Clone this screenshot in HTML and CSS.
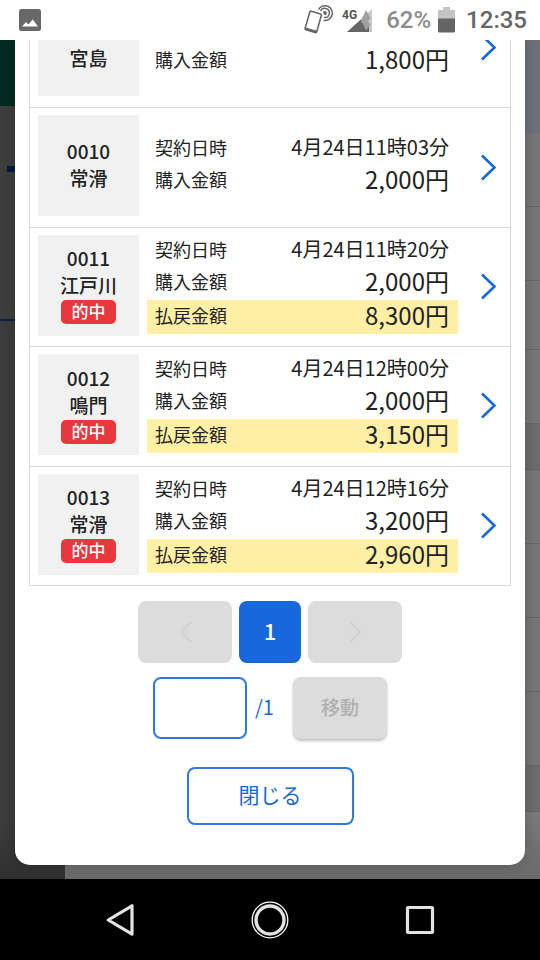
FILE: index.html
```
<!DOCTYPE html>
<html lang="ja">
<head>
<meta charset="utf-8">
<meta name="viewport" content="width=device-width, initial-scale=1">
<title>契約一覧</title>
<link rel="stylesheet" href="styles.css">
</head>
<body>
<header class="status">
  <svg class="status-photo" width="22" height="22" viewBox="0 0 22 22" aria-hidden="true"><rect width="22" height="22" rx="2.5" fill="#686868"/><path d="M3 17.500 7 13l2.500 2.500 4.200-5 5.300 7z" fill="#fff"/></svg>
  <svg class="status-nfc" width="30" height="30" viewBox="0 0 30 30" fill="none" stroke="#666" aria-hidden="true">
    <path d="M7.400 6.200 16.400 8.900Q17.700 9.300 17.300 10.600L12.800 26.600Q12.400 27.900 11.100 27.500L2 24.800Q.8 24.400 1.200 23.100L5.700 7.200Q6.100 5.800 7.400 6.200z" stroke-width="1.600"/>
    <path d="M1.600 23 12.900 26.200 12 27.500 1.400 24.400z" fill="#666"/>
    <path d="M14.400 4.600A7.400 7.400 0 1 1 19.500 15.400M16.600 6A4.600 4.600 0 1 1 20 12.500" stroke-width="1.500"/>
    <path d="M19 7.300A2 2 0 1 1 20.300 10z" fill="#666" stroke="none"/>
  </svg>
  <svg class="status-signal" width="30" height="26" viewBox="0 0 30 26" aria-hidden="true">
    <path d="M5 25 30 2v23z" fill="#c9c9c9"/>
    <path d="M5 25 19.500 12v3.500h7.500V25z" fill="#666"/>
    <path d="m20 11.500 4-8.500 4.500 8.500-3 3 3 3-4.500 6-4-9z" fill="#a0a0a0"/>
    <text x="0" y="12" class="signal-type">4G</text>
  </svg>
  <span class="status-level">62%</span>
  <svg class="status-battery" width="17" height="26" viewBox="0 0 17 26" aria-hidden="true"><path d="M5 0h7v3h5v9H0V3h5z" fill="#c4c4c4"/><path d="M0 11.500h17V24q0 1.500-1.500 1.500h-14Q0 25.500 0 24z" fill="#656565"/></svg>
  <span class="status-time">12:35</span>
</header>

<main class="stage">
  <div class="backdrop" aria-hidden="true">
    <div class="side"><div class="side-head"></div><div class="side-mark"></div><div class="side-panel"></div><div class="side-rest"></div></div>
    <div class="page">
      <div class="page-head"></div>
      <div class="page-row"></div><div class="page-row"></div><div class="page-row short"></div><div class="page-row"></div>
      <div class="page-gap"></div>
      <div class="page-row"></div><div class="page-row"></div><div class="page-row"></div><div class="page-row"></div>
      <div class="page-gap"></div>
      <div class="page-rest"></div>
    </div>
  </div>

  <section class="dialog" role="dialog" aria-label="契約一覧">
    <div class="list">
      <a class="row" href="#0009">
        <span class="race"><span>0009</span><span>宮島</span></span>
        <span class="details">
          <span class="line"><span>契約日時</span><span class="date">4月24日10時58分</span></span>
          <span class="line"><span>購入金額</span><span class="money">1,800円</span></span>
        </span>
        <svg class="arrow" width="17" height="27" viewBox="0 0 17 27" aria-hidden="true"><path d="M2 1.500 14.500 13.500 2 25.500"/></svg>
      </a>
      <a class="row" href="#0010">
        <span class="race"><span>0010</span><span>常滑</span></span>
        <span class="details">
          <span class="line"><span>契約日時</span><span class="date">4月24日11時03分</span></span>
          <span class="line"><span>購入金額</span><span class="money">2,000円</span></span>
        </span>
        <svg class="arrow" width="17" height="27" viewBox="0 0 17 27" aria-hidden="true"><path d="M2 1.500 14.500 13.500 2 25.500"/></svg>
      </a>
      <a class="row" href="#0011">
        <span class="race"><span>0011</span><span>江戸川</span><span class="hit">的中</span></span>
        <span class="details">
          <span class="line"><span>契約日時</span><span class="date">4月24日11時20分</span></span>
          <span class="line"><span>購入金額</span><span class="money">2,000円</span></span>
          <span class="line payout"><span>払戻金額</span><span class="money">8,300円</span></span>
        </span>
        <svg class="arrow" width="17" height="27" viewBox="0 0 17 27" aria-hidden="true"><path d="M2 1.500 14.500 13.500 2 25.500"/></svg>
      </a>
      <a class="row" href="#0012">
        <span class="race"><span>0012</span><span>鳴門</span><span class="hit">的中</span></span>
        <span class="details">
          <span class="line"><span>契約日時</span><span class="date">4月24日12時00分</span></span>
          <span class="line"><span>購入金額</span><span class="money">2,000円</span></span>
          <span class="line payout"><span>払戻金額</span><span class="money">3,150円</span></span>
        </span>
        <svg class="arrow" width="17" height="27" viewBox="0 0 17 27" aria-hidden="true"><path d="M2 1.500 14.500 13.500 2 25.500"/></svg>
      </a>
      <a class="row" href="#0013">
        <span class="race"><span>0013</span><span>常滑</span><span class="hit">的中</span></span>
        <span class="details">
          <span class="line"><span>契約日時</span><span class="date">4月24日12時16分</span></span>
          <span class="line"><span>購入金額</span><span class="money">3,200円</span></span>
          <span class="line payout"><span>払戻金額</span><span class="money">2,960円</span></span>
        </span>
        <svg class="arrow" width="17" height="27" viewBox="0 0 17 27" aria-hidden="true"><path d="M2 1.500 14.500 13.500 2 25.500"/></svg>
      </a>
    </div>

    <nav class="pager" aria-label="ページ">
      <button class="step" type="button" disabled aria-label="前へ"><svg width="13" height="22" viewBox="0 0 13 22" aria-hidden="true"><path d="M12 1 2 11l10 10"/></svg></button>
      <button class="current" type="button">1</button>
      <button class="step" type="button" disabled aria-label="次へ"><svg width="13" height="22" viewBox="0 0 13 22" aria-hidden="true"><path d="m1 1 10 10L1 21"/></svg></button>
    </nav>
    <form class="jump">
      <input id="page-number" type="text" inputmode="numeric">
      <label for="page-number">/1</label>
      <button type="button" disabled>移動</button>
    </form>
    <button class="close" type="button">閉じる</button>
  </section>
</main>

<nav class="keys" aria-label="ナビゲーション">
  <button type="button" aria-label="戻る"><svg width="40" height="40" viewBox="0 0 40 40" aria-hidden="true"><path d="M32 5.800v28.400L8.200 20z" fill="none" stroke="#e3e3e3" stroke-width="3.200" stroke-linejoin="round"/></svg></button>
  <button type="button" aria-label="ホーム"><svg width="40" height="40" viewBox="0 0 40 40" fill="none" aria-hidden="true"><circle cx="20" cy="20" r="17.800" stroke="#fff" stroke-width="1.300"/><circle cx="20" cy="20" r="14" stroke="#e3e3e3" stroke-width="3.400"/></svg></button>
  <button type="button" aria-label="履歴"><svg width="40" height="40" viewBox="0 0 40 40" aria-hidden="true"><rect x="7.500" y="7.500" width="25" height="25" rx=".5" fill="none" stroke="#e3e3e3" stroke-width="3.200" stroke-linejoin="round"/></svg></button>
</nav>
</body>
</html>
```
FILE: styles.css
```
* { box-sizing: border-box; }

body {
  margin: 0;
  height: 100vh;
  display: flex;
  flex-direction: column;
  overflow: hidden;
  background: #000;
  color: #222;
  font-family: "Noto Sans CJK JP", sans-serif;
}

button, input { font: inherit; margin: 0; padding: 0; }
svg { display: block; flex: none; }

/* status bar */
.status {
  position: relative;
  z-index: 1;
  flex: none;
  height: 40px;
  padding: 0 13px 0 19px;
  display: flex;
  align-items: center;
  background: #fff;
  font-family: Roboto, sans-serif;
  font-size: 24px;
  font-weight: 500;
  line-height: 42px;
}
.status-photo { margin-right: auto; }
.status-nfc { margin-right: 8px; }
.status-signal { margin-right: 14px; }
.signal-type { font: bold 12px Roboto, sans-serif; fill: #555; }
.status-level { color: #8c8c8c; margin-right: 7px; }
.status-battery { margin-right: 11px; }
.status-time { color: #666; }

/* dimmed page behind the dialog */
.stage {
  flex: 1;
  min-height: 0;
  display: grid;
  grid-template-rows: minmax(0, 1fr);
}
.backdrop, .dialog { grid-area: 1 / 1; }
.backdrop {
  display: grid;
  grid-template-columns: 65px 1fr;
  overflow: hidden;
}
.side, .page { display: flex; flex-direction: column; }
.side { background: #3e3e3e; }
.side-head { height: 66px; background: #012b22; }
.side-mark { height: 6px; margin: 60px 0 0 7px; background: #001a3e; }
.side-panel { height: 149px; border-bottom: 2px solid #0a2245; }
.side-rest { flex: 1; background: linear-gradient(#3c3c3c 90%, #303030); }
.page { background: #757575; }
.page-head { height: 93px; background: #6b7079; }
.page-row { height: 74px; border-bottom: 1px solid #646464; }
.page-row.short { height: 69px; }
.page-gap { height: 46px; background: #6c6c6c; border-bottom: 1px solid #646464; }
.page-rest { flex: 1; background: linear-gradient(#7a7a7a, #6a6a6a); }

/* dialog */
.dialog {
  margin: 0 15px 14px;
  padding: 0 14px 40px;
  display: flex;
  flex-direction: column;
  align-items: center;
  justify-content: flex-end;
  overflow: hidden;
  background: #fff;
  border-radius: 0 0 15px 15px;
  box-shadow: 0 0 14px rgba(0, 0, 0, .2);
}

.list {
  flex: none;
  align-self: stretch;
  height: 598px;
  display: grid;
  grid-auto-rows: 1fr;
  border: 1px solid #dadada;
  border-top: 0;
}
.row {
  display: flex;
  align-items: flex-start;
  padding: 7px 13px 0 8px;
  color: inherit;
  text-decoration: none;
}
.row + .row { border-top: 1px solid #dadada; }

.race {
  width: 101px;
  height: 101px;
  margin-right: 8px;
  display: flex;
  flex-direction: column;
  align-items: center;
  justify-content: center;
  background: #f1f1f1;
  font-size: 19px;
  font-weight: 500;
  line-height: 23px;
}
.race span { padding-bottom: 4px; }
.race .hit {
  width: 55px;
  padding-bottom: 2px;
  border-radius: 5px;
  background: #e8383d;
  color: #fff;
  font-size: 17px;
  line-height: 22px;
  text-align: center;
}

.details {
  flex: 1;
  height: 101px;
  padding-bottom: 2px;
  display: flex;
  flex-direction: column;
  justify-content: center;
}
.line {
  height: 32px;
  padding: 0 9px 4px 8px;
  display: flex;
  align-items: center;
  justify-content: space-between;
  font-size: 18px;
  line-height: 28px;
}
.date { font-size: 20px; }
.money { font-size: 24px; }
.payout { height: 34px; margin-top: 1px; background: #fff0a6; }

.arrow { align-self: center; margin: 0 0 8px 22px; }
.arrow path { fill: none; stroke: #1868dc; stroke-width: 2.600; }

/* paging */
.pager { display: flex; gap: 7px; margin-top: 15px; }
.pager button { height: 62px; border: 0; border-radius: 8px; }
.step {
  width: 94px;
  display: flex;
  align-items: center;
  justify-content: center;
  background: #dcdcdc;
}
.step path { fill: none; stroke: #d0d0d0; stroke-width: 2; }
.pager .current {
  width: 62px;
  padding-bottom: 5px;
  background: #1868dc;
  color: #fff;
  font-size: 22px;
  font-weight: 500;
}

.jump { display: flex; align-items: center; margin-top: 14px; }
.jump input {
  width: 94px;
  height: 62px;
  border: 2px solid #2f78df;
  border-radius: 8px;
  background: #fff;
  text-align: center;
}
.jump label { width: 46px; padding: 0 0 4px 8px; color: #1868dc; font-size: 20px; }
.jump button {
  width: 94px;
  height: 62px;
  padding-bottom: 4px;
  border: 0;
  border-radius: 8px;
  background: #dcdcdc;
  color: #b0b0b0;
  font-size: 19px;
  font-weight: 500;
  box-shadow: 0 2px 3px rgba(0, 0, 0, .25);
}

.close {
  flex: none;
  width: 167px;
  height: 58px;
  margin-top: 28px;
  padding-bottom: 4px;
  border: 2px solid #2f78df;
  border-radius: 8px;
  background: #fff;
  color: #1868dc;
  font-size: 21px;
}

/* system keys */
.keys {
  flex: none;
  height: 81px;
  padding: 0 45px;
  display: grid;
  grid-template-columns: repeat(3, 1fr);
  background: #000;
}
.keys button {
  display: flex;
  align-items: center;
  justify-content: center;
  border: 0;
  background: none;
}
```
